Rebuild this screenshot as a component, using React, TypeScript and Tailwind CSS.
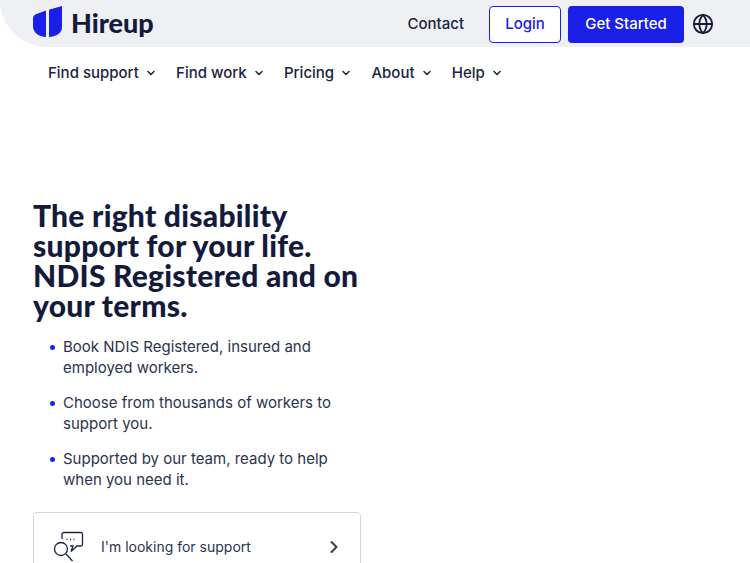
import { ChevronDown, ChevronRight, Globe } from "lucide-react";

const navItems = ["Find support", "Find work", "Pricing", "About", "Help"];

const points = [
  ["Book NDIS Registered, insured and", "employed workers."],
  ["Choose from thousands of workers to", "support you."],
  ["Supported by our team, ready to help", "when you need it."],
];

const Logo = () => (
  <svg width="30" height="32" viewBox="0 0 30 32" fill="#1a20e8" aria-hidden="true">
    <path d="M13 4.500V31C6 30.500 0 27 0 20V12.500C0 10 1.500 8.800 3.500 8Z" />
    <path d="M16 3.800L29 0V21C29 27 23.500 30.500 16 31Z" />
  </svg>
);

const SearchChat = () => (
  <svg width="32" height="32" viewBox="0 0 32 32" fill="none" stroke="#1a2340" strokeWidth="1.300" aria-hidden="true">
    <path d="M10 8V3.500C10 2.500 10.700 1.500 12 1.500H29C30 1.500 30.500 2.500 30.500 3.500V13C30.500 14.500 30 15 29 15H25L19 20.500L21 15H18" />
    <circle cx="9" cy="18" r="6.500" />
    <path d="M14 23L20.500 30" />
    <path d="M14.500 8.500H15.500M18 8.500H19M21.500 8.500H22.500" />
  </svg>
);

export default function App() {
  return (
    <div className="h-[563px] overflow-hidden bg-white text-[#1a2340] font-['Inter',sans-serif]">
      <header className="flex h-[47px] items-center justify-between rounded-bl-[47px] bg-[#eff0f4] pl-[33px] pr-[36px]">
        <div className="-mt-[3px] flex items-center gap-[8px]">
          <Logo />
          <span className="text-[27px] leading-none font-black text-[#141a3c] font-['Lato',sans-serif]">Hireup</span>
        </div>
        <div className="mt-px flex items-center">
          <a className="mr-[25px] text-[15px] font-medium text-[#1a2340]">Contact</a>
          <button className="mr-[7px] h-[37px] w-[72px] rounded border border-[#1a20e8] bg-white pt-px text-[15px] font-medium text-[#1a20e8]">
            Login
          </button>
          <button className="mr-[8px] h-[37px] w-[116px] rounded bg-[#1a20e8] pt-px text-[15px] font-medium text-white">
            Get Started
          </button>
          <Globe className="h-[22px] w-[22px] text-[#141a3c]" strokeWidth={2} />
        </div>
      </header>

      <nav className="flex items-center gap-[19.3px] pl-[48px] pt-[15px]">
        {navItems.map((item) => (
          <div key={item} className="flex items-center gap-[6px] text-[15px] leading-[22px] font-medium text-[#1a2340]">
            <span>{item}</span>
            <ChevronDown className="h-[12px] w-[12px]" strokeWidth={3} />
          </div>
        ))}
      </nav>

      <main className="pl-[33px] pt-[116px]">
        <h1 className="text-[30px] leading-[30px] font-black tracking-[0.25px] text-[#141a3c] font-['Lato',sans-serif]">
          The right disability
          <br />
          support for your life.
          <br />
          NDIS Registered and on
          <br />
          your terms.
        </h1>

        <ul className="mt-[15.7px] flex flex-col gap-[14.3px] pl-[17px]">
          {points.map(([first, second]) => (
            <li key={first} className="flex text-[15px] leading-[21px] text-[#2a3350]">
              <span className="mt-[9px] mr-[8px] h-[5px] w-[5px] shrink-0 rounded-full bg-[#1a20e8]" />
              <span>
                {first}
                <br />
                {second}
              </span>
            </li>
          ))}
        </ul>

        <div className="mt-[21.9px] flex h-[80px] w-[328px] items-start rounded border border-[#d3d6e0] pl-[18px] pr-[16px] pt-[18px]">
          <SearchChat />
          <span className="ml-[17px] mt-[6px] text-sm leading-[20px] text-[#2a3350]">I'm looking for support</span>
          <ChevronRight className="ml-auto mt-[6px] h-[20px] w-[20px] text-[#3a4258]" strokeWidth={2.500} />
        </div>
      </main>
    </div>
  );
}
